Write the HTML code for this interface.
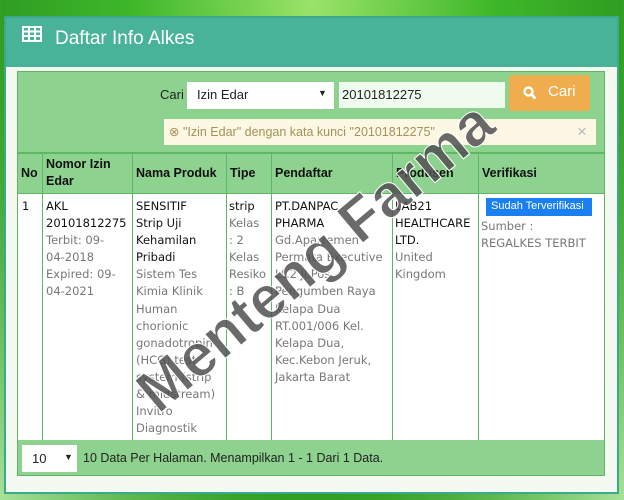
<!DOCTYPE html><html><head><style>
*{margin:0;padding:0;box-sizing:border-box}
body{width:624px;height:500px;overflow:hidden;position:relative;font-family:"Liberation Sans",sans-serif;background:radial-gradient(ellipse at 50% 0%,#9be36a 0%,#3fb82a 40%,#2f9e22 70%,#a8e29a 100%)}
.a{position:absolute}
.panel{left:4px;top:16px;width:615px;height:478px;background:#f4faf2;border:2px solid #3aa98d}
.hdr{left:6px;top:18px;width:611px;height:49px;background:#49b39a;color:#fff;font-size:19px}
.box{left:17px;top:71px;width:588px;height:405px;background:#8ed28f;border:1px solid #5cb865}
.dat{left:18px;top:194px;width:586px;height:246px;background:#fff}
.vl{position:absolute;top:153px;height:287px;width:1px;background:#5cb865}
.th{position:absolute;font-weight:bold;font-size:12.5px;color:#111;line-height:17px}
.td{position:absolute;top:198px;font-family:"DejaVu Sans",sans-serif;font-size:11.5px;line-height:17.1px;color:#777;white-space:nowrap}
.td b{font-weight:normal;color:#111}
</style></head><body>
<div class="a panel"></div>
<div class="a hdr">
<svg class="a" style="left:16px;top:8px" width="20" height="16" viewBox="0 0 20 16"><rect x="1" y="1" width="18" height="14" fill="none" stroke="#fff" stroke-width="2"/><path d="M1 5.5H19M1 10H19M7 1V15M13 1V15" stroke="#fff" stroke-width="2"/></svg>
<span class="a" style="left:49px;top:10px">Daftar Info Alkes</span></div>
<div class="a box"></div>
<div class="a" style="left:160px;top:87px;font-size:13px;color:#222">Cari</div>
<div class="a" style="left:187px;top:82px;width:147px;height:27px;background:#fff;font-size:13px;color:#222;padding:5px 0 0 10px">Izin Edar<span class="a" style="left:131px;top:6px;font-size:9px">▼</span></div>
<div class="a" style="left:339px;top:82px;width:166px;height:26px;background:#f0fbf0;font-size:13px;color:#222;padding:5px 0 0 3px">20101812275</div>
<div class="a" style="left:509px;top:75px;width:81px;height:36px;background:#f0ad4e;border-radius:3px;color:#fff;font-size:15px;padding:8px 0 0 39px">Cari
<svg class="a" style="left:14px;top:11px" width="14" height="14" viewBox="0 0 14 14"><circle cx="5.5" cy="5.5" r="4" fill="none" stroke="#fff" stroke-width="2.4"/><path d="M8.5 8.5L12.5 12.5" stroke="#fff" stroke-width="2.8"/></svg></div>
<div class="a" style="left:164px;top:119px;width:432px;height:26px;background:#fcf8e3;color:#a8905a;font-size:12.5px;padding:5px 0 0 5px">⊗ "Izin Edar" dengan kata kunci "20101812275"<span class="a" style="left:413px;top:3px;color:#bbb;font-size:17px">×</span></div>
<div class="a" style="left:17px;top:152px;width:588px;height:2px;background:#5cb865"></div>
<div class="a dat"></div>
<div class="a" style="left:17px;top:193px;width:588px;height:1px;background:#5cb865"></div>
<div class="vl" style="left:42px"></div><div class="vl" style="left:132px"></div><div class="vl" style="left:226px"></div><div class="vl" style="left:271px"></div><div class="vl" style="left:392px"></div><div class="vl" style="left:478px"></div>
<div class="th" style="left:21px;top:165px">No</div>
<div class="th" style="left:46px;top:156px">Nomor Izin<br>Edar</div>
<div class="th" style="left:136px;top:165px">Nama Produk</div>
<div class="th" style="left:230px;top:165px">Tipe</div>
<div class="th" style="left:275px;top:165px">Pendaftar</div>
<div class="th" style="left:396px;top:165px">Produsen</div>
<div class="th" style="left:482px;top:165px">Verifikasi</div>
<div class="td" style="left:22px"><b>1</b></div>
<div class="td" style="left:46px"><b>AKL<br>20101812275</b><br>Terbit: 09-<br>04-2018<br>Expired: 09-<br>04-2021</div>
<div class="td" style="left:136px"><b>SENSITIF<br>Strip Uji<br>Kehamilan<br>Pribadi</b><br>Sistem Tes<br>Kimia Klinik<br>Human<br>chorionic<br>gonadotropin<br>(HCG) test<br>system (strip<br>&amp; midstream)<br>Invitro<br>Diagnostik</div>
<div class="td" style="left:229px"><b>strip</b><br>Kelas<br>: 2<br>Kelas<br>Resiko<br>: B</div>
<div class="td" style="left:275px"><b>PT.DANPAC<br>PHARMA</b><br>Gd.Apartemen<br>Permata Executive<br>Lt.2 Jl.Pos<br>Pengumben Raya<br>Kelapa Dua<br>RT.001/006 Kel.<br>Kelapa Dua,<br>Kec.Kebon Jeruk,<br>Jakarta Barat</div>
<div class="td" style="left:395px"><b>LAB21<br>HEALTHCARE<br>LTD.</b><br>United<br>Kingdom</div>
<div class="a" style="left:486px;top:198px;width:106px;height:18px;background:#1a7ff0;color:#fff;font-size:11px;padding:2px 0 0 5px">Sudah Terverifikasi</div>
<div class="td" style="left:481px;top:218px">Sumber :<br>REGALKES TERBIT</div>
<div class="a" style="left:22px;top:445px;width:55px;height:27px;background:#fff;font-size:13px;color:#222;padding:6px 0 0 10px">10<span class="a" style="left:42px;top:7px;font-size:9px">▼</span></div>
<div class="a" style="left:83px;top:451px;font-size:12.5px;color:#222">10 Data Per Halaman. Menampilkan 1 - 1 Dari 1 Data.</div>
<div class="a" style="left:55px;top:222px;width:520px;text-align:center;font-weight:bold;font-size:60px;color:rgba(80,80,80,0.85);transform:rotate(-40deg);white-space:nowrap;-webkit-text-stroke:1px #fff">Menteng Farma</div>
</body></html>
